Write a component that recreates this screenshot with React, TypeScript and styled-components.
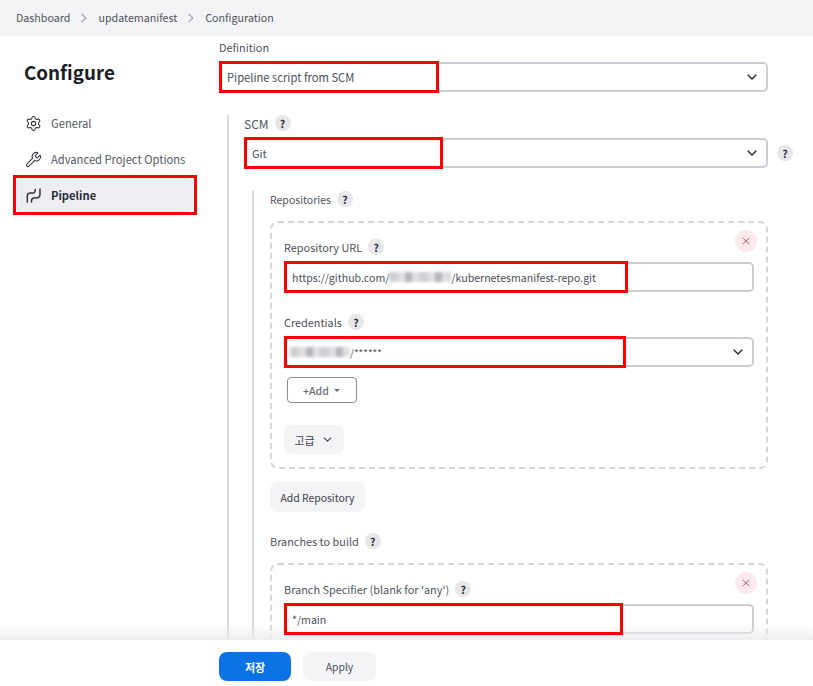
import { ChevronDown, Settings, Wrench, X } from "lucide-react";
import styled, { createGlobalStyle } from "styled-components";

const GlobalStyle = createGlobalStyle`
  html, body {
    margin: 0;
    padding: 0;
    background: #fff;
  }
  body {
    font-family: "Noto Sans CJK KR", "Noto Sans", sans-serif;
    font-size: 11px;
    color: #4b4e59;
  }
  * {
    box-sizing: border-box;
  }
`;

const Page = styled.div`
  position: relative;
  width: 813px;
  height: 686px;
  overflow: hidden;
  background: #fff;
`;

const Breadcrumbs = styled.nav`
  display: flex;
  align-items: center;
  height: 36px;
  padding: 0 0 0 16px;
  background: #f4f4f6;
  color: #4f525c;
  font-size: 10.7px;
`;

const Crumb = styled.span`
  line-height: 16px;
`;

const CrumbArrow = styled.svg`
  width: 8px;
  height: 10px;
  margin: 0 10px;
  fill: none;
  stroke: #a4a7ad;
  stroke-width: 1.2;
`;

const Layout = styled.div`
  display: flex;
`;

const Sidebar = styled.aside`
  flex: 0 0 219px;
  padding: 0 0 0 15px;
`;

const Heading = styled.h1`
  margin: 24px 0 22px 9px;
  font-size: 18.8px;
  line-height: 24px;
  font-weight: 700;
  color: #1b1d26;
`;

const SideItem = styled.div<{ $active?: boolean }>`
  position: relative;
  display: flex;
  align-items: center;
  gap: 9px;
  width: 178px;
  height: 34px;
  margin-bottom: 2px;
  padding-left: 10px;
  border-radius: 6px;
  background: ${({ $active }) => ($active ? "#eeeef2" : "transparent")};
  color: ${({ $active }) => ($active ? "#2b2d36" : "#555862")};
  font-weight: ${({ $active }) => ($active ? 700 : 400)};
  font-size: 11.2px;
  white-space: nowrap;

  svg {
    flex: none;
  }
`;

const Main = styled.main`
  flex: 0 0 549px;
  padding-top: 3px;
`;

const Label = styled.div<{ $size?: number }>`
  display: flex;
  align-items: center;
  gap: 6px;
  height: 16px;
  margin-bottom: 7px;
  font-size: ${({ $size }) => $size ?? 10.9}px;
  color: #4f525c;
`;

const Help = styled.span`
  display: inline-flex;
  flex: none;
  align-items: center;
  justify-content: center;
  width: 16px;
  height: 16px;
  border-radius: 50%;
  background: #e7e7ea;
  color: #2f3038;
  font-size: 10.5px;
  font-weight: 700;
`;

const Control = styled.div<{ $size?: number }>`
  position: relative;
  display: flex;
  flex: 1;
  align-items: center;
  height: 30px;
  padding: 0 6px;
  border: 2px solid #c9ced5;
  border-radius: 5px;
  background: #fff;
  color: #4b4e59;
  font-size: ${({ $size }) => $size ?? 11}px;
  white-space: nowrap;

  svg {
    position: absolute;
    right: 6px;
    color: #23252e;
  }
`;

const RedBox = styled.span<{ $width: number }>`
  position: absolute;
  z-index: 2;
  left: -2px;
  top: -3px;
  bottom: -3px;
  width: ${({ $width }) => $width}px;
  border: 3px solid #f00;
  pointer-events: none;
`;

const Blur = styled.span<{ $width: number; $shift?: number }>`
  display: inline-block;
  width: ${({ $width }) => $width}px;
  height: 10px;
  margin-left: ${({ $shift }) => $shift ?? 0}px;
  background: repeating-linear-gradient(
    90deg,
    #cfd0d4 0 9px,
    #e0e1e4 9px 16px,
    #b4b6bb 16px 23px,
    #dfe0e3 23px 30px
  );
  filter: blur(1.5px);
`;

const ScmBlock = styled.section`
  margin: 23px 0 0 8px;
  padding: 0 0 0 15px;
  border-left: 2px solid #d6d9de;
`;

const ScmRow = styled.div`
  display: flex;
  align-items: center;
  gap: 9px;
  margin-right: -25px;
`;

const NestedBlock = styled.section`
  margin: 23px 0 0 8px;
  padding: 0 0 0 16px;
  border-left: 2px solid #d6d9de;
`;

const RepeatCard = styled.div`
  position: relative;
  margin-top: 14px;
  padding: 16px 12px 13px 12px;
  border: 2px dashed #d3d7dc;
  border-radius: 8px;
`;

const RemoveButton = styled.span`
  position: absolute;
  top: 7px;
  right: 9px;
  display: flex;
  align-items: center;
  justify-content: center;
  width: 22px;
  height: 22px;
  border-radius: 50%;
  background: #fbe9eb;
  color: #ea3f55;
`;

const AddButton = styled.button`
  display: flex;
  align-items: center;
  height: 26px;
  margin: 10px 0 22px 3px;
  padding: 0 0 0 15px;
  width: 70px;
  border: 1.5px solid #878b93;
  border-radius: 4px;
  background: #fff;
  color: #6d7079;
  font: 500 10.5px "Noto Sans CJK KR", sans-serif;
`;

const Caret = styled.i`
  width: 0;
  height: 0;
  margin-left: 5px;
  border: 3px solid transparent;
  border-top: 3px solid #6d7079;
  border-bottom: 0;
`;

const SoftButton = styled.button<{ $wide?: number }>`
  display: flex;
  align-items: center;
  justify-content: center;
  gap: 6px;
  width: ${({ $wide }) => $wide ?? 60}px;
  height: 29px;
  padding: 0;
  border: 0;
  border-radius: 8px;
  background: #f4f4f6;
  color: #3e4049;
  font: 400 11px "Noto Sans CJK KR", sans-serif;
`;

const AddRepository = styled(SoftButton)`
  margin: 13px 0 21px;
  height: 30px;
  font-size: 10.4px;
`;

const Fieldset = styled.div`
  margin-bottom: 22px;
`;

const Footer = styled.footer`
  position: absolute;
  z-index: 1;
  left: 0;
  right: 0;
  bottom: 0;
  display: flex;
  gap: 12px;
  height: 46px;
  padding: 12px 0 0 219px;
  background: #fff;

  &::before {
    content: "";
    position: absolute;
    left: 0;
    right: 0;
    top: -16px;
    height: 16px;
    background: linear-gradient(rgba(240, 240, 242, 0), rgba(236, 236, 238, 0.9));
  }
`;

const PrimaryButton = styled(SoftButton)`
  width: 72px;
  background: #0b72e4;
  color: #fff;
  font-weight: 700;
`;

const ApplyButton = styled(SoftButton)`
  width: 73px;
  color: #4b4e59;
  font-size: 10.4px;
`;

const PipelineIcon = () => (
  <svg width="17" height="17" viewBox="0 0 17 17" fill="none" stroke="#33353e" strokeWidth="1.5" strokeLinecap="round">
    <path d="M2.3 15V9.5C2.3 7.2 3.6 6 5.5 6H7.5C9.2 6 10.3 5 10.3 2.5" />
    <path d="M6.5 15V14C6.5 12.2 7.8 11 9.5 11H11C13.5 11 15 9.5 15 7V2" />
  </svg>
);

const Arrow = () => (
  <CrumbArrow viewBox="0 0 8 10">
    <path d="M1.5 1 6 5 1.5 9" />
  </CrumbArrow>
);

export default function App() {
  return (
    <Page>
      <GlobalStyle />
      <Breadcrumbs>
        <Crumb>Dashboard</Crumb>
        <Arrow />
        <Crumb>updatemanifest</Crumb>
        <Arrow />
        <Crumb>Configuration</Crumb>
      </Breadcrumbs>
      <Layout>
        <Sidebar>
          <Heading>Configure</Heading>
          <SideItem>
            <Settings size={17} strokeWidth={1.5} color="#33353e" />
            General
          </SideItem>
          <SideItem>
            <Wrench size={17} strokeWidth={1.5} color="#33353e" />
            Advanced Project Options
          </SideItem>
          <SideItem $active>
            <PipelineIcon />
            Pipeline
            <RedBox $width={184} />
          </SideItem>
        </Sidebar>
        <Main>
          <Label>Definition</Label>
          <Control $size={11.2}>
            Pipeline script from SCM
            <ChevronDown size={16} strokeWidth={2} />
            <RedBox $width={220} />
          </Control>
          <ScmBlock>
            <Label $size={12}>
              SCM <Help>?</Help>
            </Label>
            <ScmRow>
              <Control>
                Git
                <ChevronDown size={16} strokeWidth={2} />
                <RedBox $width={199} />
              </Control>
              <Help>?</Help>
            </ScmRow>
            <NestedBlock>
              <Label $size={10.5}>
                Repositories <Help>?</Help>
              </Label>
              <RepeatCard>
                <RemoveButton>
                  <X size={12} strokeWidth={1.8} />
                </RemoveButton>
                <Fieldset>
                  <Label>
                    Repository URL <Help>?</Help>
                  </Label>
                  <Control $size={10.6}>
                    https://github.com/
                    <Blur $width={62} />
                    /kubernetesmanifest-repo.git
                    <RedBox $width={344} />
                  </Control>
                </Fieldset>
                <Label>
                  Credentials <Help>?</Help>
                </Label>
                <Control $size={10}>
                  <Blur $width={60} $shift={-2} />
                  /******
                  <ChevronDown size={16} strokeWidth={2} />
                  <RedBox $width={342} />
                </Control>
                <AddButton>
                  +Add
                  <Caret />
                </AddButton>
                <SoftButton>
                  고급 <ChevronDown size={13} strokeWidth={2} />
                </SoftButton>
              </RepeatCard>
              <AddRepository $wide={95}>Add Repository</AddRepository>
              <Label>
                Branches to build <Help>?</Help>
              </Label>
              <RepeatCard>
                <RemoveButton>
                  <X size={12} strokeWidth={1.8} />
                </RemoveButton>
                <Label>
                  Branch Specifier (blank for &apos;any&apos;) <Help>?</Help>
                </Label>
                <Control $size={10.6}>
                  */main
                  <RedBox $width={339} />
                </Control>
                <Fieldset />
              </RepeatCard>
            </NestedBlock>
          </ScmBlock>
        </Main>
      </Layout>
      <Footer>
        <PrimaryButton>저장</PrimaryButton>
        <ApplyButton>Apply</ApplyButton>
      </Footer>
    </Page>
  );
}
